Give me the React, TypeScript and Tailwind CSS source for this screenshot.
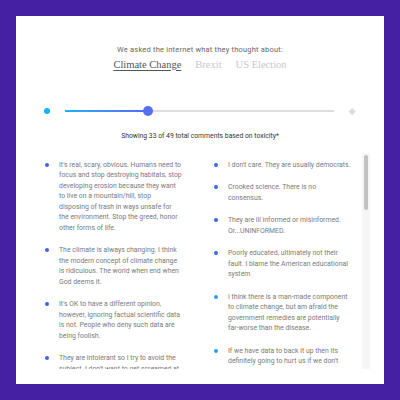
import React from "react";

type Item = { text: React.ReactNode; hot: boolean };

const left: Item[] = [
  {
    text: "It's real, scary, obvious. Humans need to focus and stop destroying habitats, stop developing erosion because they want to live on a mountain/hill, stop disposing of trash in ways unsafe for the environment. Stop the greed, honor other forms of life.",
    hot: true,
  },
  {
    text: "The climate is always changing. I think the modern concept of climate change is ridiculous. The world when end when God deems it.",
    hot: true,
  },
  {
    text: "It's OK to have a different opinion, however, ignoring factual scientific data is not. People who deny such data are being foolish.",
    hot: true,
  },
  {
    text: "They are intolerant so I try to avoid the subject. I don't want to get screamed at or called names for what I think.",
    hot: true,
  },
];

const right: Item[] = [
  { text: "I don't care. They are usually democrats.", hot: true },
  {
    text: (
      <>
        Crooked science. There is no
        <br />
        consensus.
      </>
    ),
    hot: true,
  },
  { text: "They are ill informed or misinformed. Or...UNINFORMED.", hot: true },
  {
    text: "Poorly educated, ultimately not their fault. I blame the American educational system",
    hot: true,
  },
  {
    text: (
      <>
        I think there is a man-made component to climate change, but am afraid the
        government remedies are potentially{" "}
        <span className="whitespace-nowrap">far-worse</span> than the disease.
      </>
    ),
    hot: false,
  },
  {
    text: (
      <>
        If we have data to back it up then its definitely going to hurt us if we don't{" "}
        <span className="whitespace-nowrap">do something</span> about it.
      </>
    ),
    hot: false,
  },
];

function Comment({ item }: { item: Item }) {
  return (
    <li className="mb-[12px] flex gap-[10px]">
      <span
        className={
          "mt-[3.25px] size-[4px] shrink-0 rounded-full " +
          (item.hot ? "bg-[#3b63ef]" : "bg-[#2b9bf2]")
        }
      />
      <p className="w-[123.5px] text-[6.9px] leading-[10.5px] text-[#7a7a7a]">
        {item.text}
      </p>
    </li>
  );
}

export default function App() {
  return (
    <div className="h-[400px] w-[400px] bg-[#4520a2] p-4 font-['Roboto',sans-serif]">
      <div className="flex h-full flex-col bg-white pt-[29px]">
        <p className="text-center text-[7.5px] leading-[10px] tracking-[0.2px] text-[#666]">
          We asked the internet what they thought about:
        </p>

        <nav className="mt-[1.5px] flex justify-center gap-[14px] font-['Liberation_Serif',serif] text-[10.5px] leading-[15px]">
          <span className="text-[#555] underline decoration-[#555] underline-offset-[2px]">
            Climate Change
          </span>
          <span className="text-[#c8c8c8]">Brexit</span>
          <span className="text-[#c8c8c8]">US Election</span>
        </nav>

        <div className="mt-[34.5px] flex h-[10px] items-center pl-[28px]">
          <span className="size-[6px] rounded-full bg-[#12b2fa]" />
          <div className="relative ml-[15px] h-[1.5px] w-[269px] bg-[#dedede]">
            <div className="h-full w-[83px] bg-gradient-to-r from-[#1ab0f5] to-[#5468f0]" />
            <span className="absolute left-[78px] top-[-4.25px] size-[10px] rounded-full bg-[#5670f5]" />
          </div>
          <span className="ml-[16px] size-[4.5px] rotate-45 bg-[#dcdcdc]" />
        </div>

        <p className="mt-[15px] text-center text-[6.8px] leading-[10px] text-[#333]">
          Showing 33 of 49 total comments based on toxicity*
        </p>

        <div className="mt-[12px] flex h-[216px] pl-[29px] pr-[14px]">
          <div className="flex flex-1 overflow-hidden pt-[6.5px]">
            <ul className="w-[169px] shrink-0">
              {left.map((c, i) => (
                <Comment key={i} item={c} />
              ))}
            </ul>
            <ul className="w-[148px] shrink-0">
              {right.map((c, i) => (
                <Comment key={i} item={c} />
              ))}
            </ul>
          </div>
          <div className="w-[8px] shrink-0 bg-[#f6f6f6] px-[2px] pt-[2px]">
            <div className="h-[55px] rounded-full bg-[#c2c2c2]" />
          </div>
        </div>
      </div>
    </div>
  );
}
